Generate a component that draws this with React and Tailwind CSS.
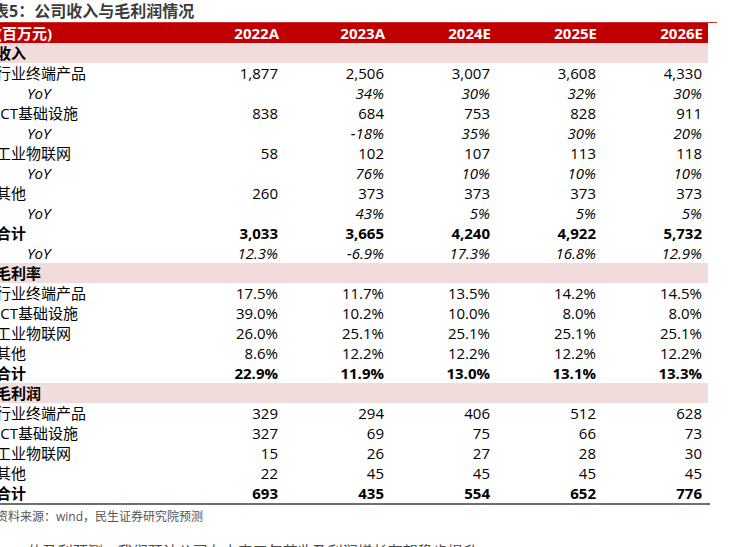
import React from "react";

const rows = [
  { type: "section", label: "收入" },
  { label: "行业终端产品", v: ["1,877", "2,506", "3,007", "3,608", "4,330"] },
  { label: "YoY", yoy: true, v: ["", "34%", "30%", "32%", "30%"] },
  { label: "ICT基础设施", v: ["838", "684", "753", "828", "911"] },
  { label: "YoY", yoy: true, v: ["", "-18%", "35%", "30%", "20%"] },
  { label: "工业物联网", v: ["58", "102", "107", "113", "118"] },
  { label: "YoY", yoy: true, v: ["", "76%", "10%", "10%", "10%"] },
  { label: "其他", v: ["260", "373", "373", "373", "373"] },
  { label: "YoY", yoy: true, v: ["", "43%", "5%", "5%", "5%"] },
  { label: "合计", bold: true, v: ["3,033", "3,665", "4,240", "4,922", "5,732"] },
  { label: "YoY", yoy: true, v: ["12.3%", "-6.9%", "17.3%", "16.8%", "12.9%"] },
  { type: "section", label: "毛利率" },
  { label: "行业终端产品", v: ["17.5%", "11.7%", "13.5%", "14.2%", "14.5%"] },
  { label: "ICT基础设施", v: ["39.0%", "10.2%", "10.0%", "8.0%", "8.0%"] },
  { label: "工业物联网", v: ["26.0%", "25.1%", "25.1%", "25.1%", "25.1%"] },
  { label: "其他", v: ["8.6%", "12.2%", "12.2%", "12.2%", "12.2%"] },
  { label: "合计", bold: true, v: ["22.9%", "11.9%", "13.0%", "13.1%", "13.3%"] },
  { type: "section", label: "毛利润" },
  { label: "行业终端产品", v: ["329", "294", "406", "512", "628"] },
  { label: "ICT基础设施", v: ["327", "69", "75", "66", "73"] },
  { label: "工业物联网", v: ["15", "26", "27", "28", "30"] },
  { label: "其他", v: ["22", "45", "45", "45", "45"] },
  { label: "合计", bold: true, v: ["693", "435", "554", "652", "776"] },
];

const years = ["2022A", "2023A", "2024E", "2025E", "2026E"];

function Row({ r }) {
  if (r.type === "section") {
    return (
      <div className="grid grid-cols-[178px_repeat(5,106px)] h-[20px] bg-[#f2dcdb] pr-[4px] items-center">
        <div className="font-bold text-[15px] leading-[20px] text-black whitespace-nowrap">{r.label}</div>
      </div>
    );
  }
  return (
    <div className="grid grid-cols-[178px_repeat(5,106px)] h-[20px] pr-[4px] items-center">
      <div
        className={
          "text-[15px] leading-[20px] text-black whitespace-nowrap " +
          (r.yoy ? "italic pl-[31px]" : "") +
          (r.bold ? " font-bold" : "")
        }
      >
        {r.label}
      </div>
      {r.v.map((x, i) => (
        <div
          key={i}
          className={
            "text-right pr-[2px] text-[15px] leading-[20px] text-black whitespace-nowrap " +
            (r.yoy ? "italic" : "") +
            (r.bold ? " font-bold" : "")
          }
        >
          {x}
        </div>
      ))}
    </div>
  );
}

export default function App() {
  return (
    <div
      className="w-[739px] h-[547px] overflow-hidden bg-white"
      style={{ fontFamily: '"Open Sans", "Noto Sans CJK SC", sans-serif' }}
    >
      <div className="ml-[-4px] flex flex-col">
        <div className="ml-[-3px] h-[22px] text-[16px] leading-[22px] font-bold text-[#3c3c3c] whitespace-nowrap">
          表5：公司收入与毛利润情况
        </div>
        <div className="h-[1px] w-[721px] bg-[#d03030]"></div>
        <div className="w-[712px] flex flex-col">
          <div className="grid grid-cols-[178px_repeat(5,106px)] h-[20px] bg-[#c00000] pr-[4px] items-center">
            <div className="pl-[1px] font-bold text-[15px] leading-[20px] text-white whitespace-nowrap">(百万元)</div>
            {years.map((y) => (
              <div key={y} className="text-right pr-[1px] font-bold text-[15px] leading-[20px] text-white">
                {y}
              </div>
            ))}
          </div>
          {rows.map((r, i) => (
            <Row key={i} r={r} />
          ))}
          <div className="h-[2px] w-[714px] bg-[#6f6f6f]"></div>
        </div>
        <div className="h-[24px] text-[12px] leading-[24px] text-[#555555] whitespace-nowrap">
          资料来源：wind，民生证券研究院预测
        </div>
        <div className="mt-[12px] ml-[24px] text-[15px] leading-[20px] text-[#4a4a4a] whitespace-nowrap">
          · 的盈利预测：我们预计公司在未来三年营收及利润增长有望稳步提升。
        </div>
      </div>
    </div>
  );
}
